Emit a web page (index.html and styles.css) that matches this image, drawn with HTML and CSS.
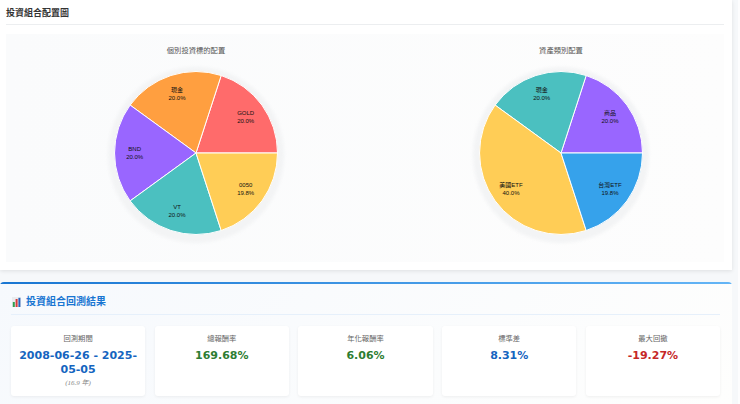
FILE: index.html
```html
<!DOCTYPE html>
<html lang="zh-Hant">
<head>
<meta charset="utf-8">
<title>投資組合</title>
<link rel="stylesheet" href="styles.css">
</head>
<body>
<div class="page">
  <section class="alloc">
    <h2 class="alloc-title">投資組合配置圖</h2>
    <div class="charts">
      <figure class="chart">
        <figcaption class="chart-title">個別投資標的配置</figcaption>
        <svg class="pie" viewBox="0 0 200 184" width="200" height="184">
          <circle class="halo" cx="100" cy="92" r="88"/>
          <g class="slices">
            <path fill="#ff6b6b" d="M100 90L181.5 90A81.500 81.500 0 0 0 125.2 12.500Z"/>
            <path fill="#ff9f40" d="M100 90L125.2 12.500A81.500 81.500 0 0 0 34.100 42.100Z"/>
            <path fill="#9966ff" d="M100 90L34.100 42.100A81.500 81.500 0 0 0 34.100 137.900Z"/>
            <path fill="#4bc0c0" d="M100 90L34.100 137.900A81.500 81.500 0 0 0 125.2 167.500Z"/>
            <path fill="#ffcd56" d="M100 90L125.2 167.500A81.500 81.500 0 0 0 181.500 90Z"/>
          </g>
          <g class="labels">
            <text x="149.700" y="51.500">GOLD</text><text x="149.700" y="59.500">20.0%</text>
            <text x="81" y="29.200">現金</text><text x="81" y="37.200">20.0%</text>
            <text x="38.700" y="87.500">BND</text><text x="38.700" y="95.500">20.0%</text>
            <text x="81" y="145.900">VT</text><text x="81" y="153.900">20.0%</text>
            <text x="149.700" y="123.500">0050</text><text x="149.700" y="131.700">19.8%</text>
          </g>
        </svg>
      </figure>
      <figure class="chart">
        <figcaption class="chart-title">資產類別配置</figcaption>
        <svg class="pie" viewBox="0 0 200 184" width="200" height="184">
          <circle class="halo" cx="100" cy="92" r="88"/>
          <g class="slices">
            <path fill="#9966ff" d="M100 90L181.5 90A81.500 81.500 0 0 0 125.2 12.500Z"/>
            <path fill="#4bc0c0" d="M100 90L125.2 12.500A81.500 81.500 0 0 0 34.100 42.100Z"/>
            <path fill="#ffcd56" d="M100 90L34.100 42.100A81.500 81.500 0 0 0 125.2 167.500Z"/>
            <path fill="#36a2eb" d="M100 90L125.2 167.500A81.500 81.500 0 0 0 181.500 90Z"/>
          </g>
          <g class="labels">
            <text x="149" y="51.500">商品</text><text x="149" y="59.500">20.0%</text>
            <text x="80.700" y="29.200">現金</text><text x="80.700" y="37.200">20.0%</text>
            <text x="50" y="123.500">美國ETF</text><text x="50" y="131.700">40.0%</text>
            <text x="149" y="123.500">台灣ETF</text><text x="149" y="131.700">19.8%</text>
          </g>
        </svg>
      </figure>
    </div>
  </section>

  <section class="results">
    <h2 class="results-title">
      <svg class="results-icon" viewBox="0 0 9 10" width="9" height="10" aria-hidden="true">
        <rect x="0" y="0" width="9" height="10" fill="#e9ecef"/>
        <rect x="0.800" y="5" width="2" height="5" fill="#2e9e4f"/>
        <rect x="3.600" y="2" width="2" height="8" fill="#d83a3a"/>
        <rect x="6.400" y="0.800" width="2" height="9.200" fill="#2a62b8"/>
      </svg>
      投資組合回測結果
    </h2>
    <div class="stats">
      <div class="stat"><div class="stat-label">回測期間</div><div class="stat-value blue">2008-06-26 - 2025-05-05</div><div class="stat-note">(16.9 年)</div></div>
      <div class="stat"><div class="stat-label">總報酬率</div><div class="stat-value green">169.68%</div></div>
      <div class="stat"><div class="stat-label">年化報酬率</div><div class="stat-value green">6.06%</div></div>
      <div class="stat"><div class="stat-label">標準差</div><div class="stat-value blue">8.31%</div></div>
      <div class="stat"><div class="stat-label">最大回撤</div><div class="stat-value red">-19.27%</div></div>
    </div>
  </section>
</div>
</body>
</html>
```

FILE: styles.css
```css
* { box-sizing: border-box; }
html, body { margin: 0; padding: 0; }
body {
  width: 740px;
  height: 404px;
  overflow: hidden;
  background: linear-gradient(90deg, #f6f8fa 738px, #fdfdfe 738px);
  font-family: "Liberation Sans", "Noto Sans CJK TC", sans-serif;
}
.page {
  width: 732px;
  display: flex;
  flex-direction: column;
  gap: 12px;
}
.alloc {
  height: 270px;
  padding: 7px 8px 0 6px;
  background: #fff;
  box-shadow: 0 1px 4px rgba(0, 0, 0, .1);
}
.alloc-title {
  margin: 0;
  padding: 0 0 5px 0;
  height: 18px;
  font-size: 9px;
  line-height: 12px;
  font-weight: 700;
  color: #333;
  border-bottom: 1px solid #eceef0;
}
.charts {
  margin-top: 9px;
  height: 228px;
  padding: 0 0 0 30px;
  background: linear-gradient(90deg, #fafbfc, #fdfdfd);
  display: flex;
  gap: 45px;
}
.chart {
  margin: 0;
  width: 320px;
  display: flex;
  flex-direction: column;
  align-items: center;
}
.chart-title {
  margin-top: 12px;
  font-size: 7.300px;
  line-height: 10px;
  height: 17px;
  color: #555;
}
.pie { display: block; overflow: visible; }
.halo { fill: #f3f4f5; filter: blur(1.5px); }
.slices path { stroke: #fff; stroke-width: 1; stroke-linejoin: round; }
.labels text {
  font-family: "Liberation Sans", "Noto Sans CJK TC", sans-serif;
  font-size: 6px;
  fill: #111;
  text-anchor: middle;
}
.results {
  height: 122px;
  padding: 13px 12px 0 11px;
  border-radius: 4px 4px 0 0;
  background:
    linear-gradient(90deg, #1976d2, #64b5f6) top / 100% 2px no-repeat,
    linear-gradient(135deg, #f6f9fd, #fefefd);
}
.results-title {
  margin: 0;
  height: 20px;
  display: flex;
  align-items: flex-start;
  gap: 5px;
  font-size: 10px;
  line-height: 14px;
  font-weight: 700;
  color: #1976d2;
  border-bottom: 1px solid #e6f0fb;
}
.results-icon { margin: 2px 0 0 1px; flex: none; }
.stats {
  margin-top: 11px;
  display: flex;
  gap: 9.500px;
}
.stat {
  flex: 1 1 0;
  height: 70px;
  padding: 8px 5px 0;
  background: #fff;
  border-radius: 3px;
  box-shadow: 0 1px 3px rgba(0, 0, 0, .06);
  text-align: center;
}
.stat-label { font-size: 7.300px; line-height: 10px; color: #666; }
.stat-value {
  margin-top: 5px;
  font-family: "DejaVu Sans", sans-serif;
  font-size: 11px;
  line-height: 13.500px;
  font-weight: 700;
}
.stat-note {
  margin-top: 2.500px;
  font-family: "Liberation Serif", "Noto Sans CJK TC", serif;
  font-size: 7px;
  line-height: 8px;
  font-style: italic;
  color: #888;
}
.blue { color: #1565c0; }
.green { color: #2e7d32; }
.red { color: #c62828; }
```
